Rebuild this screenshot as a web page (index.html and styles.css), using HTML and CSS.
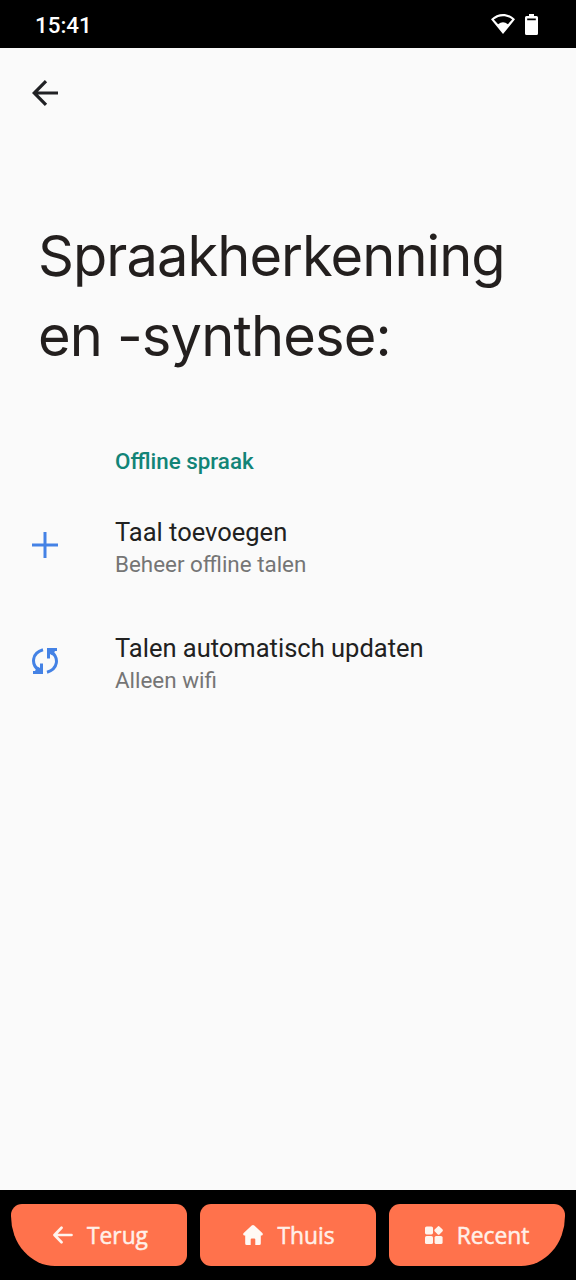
FILE: index.html
```html
<!DOCTYPE html>
<html lang="nl">
<head>
<meta charset="utf-8">
<title>Spraakherkenning en -synthese</title>
<link rel="stylesheet" href="styles.css">
</head>
<body>
<div class="screen">
  <header class="status">
    <span class="clock">15:41</span>
    <div class="status-icons">
      <svg width="24" height="20" viewBox="0 0 24 20"><path fill="#fff" fill-rule="evenodd" d="M0 5.300C7-1.700 17-1.700 24 5.300L12 20ZM2.800 5.600L7.100 10.200Q12 6.500 16.900 10.200L21.200 5.600C15.500 1 8.500 1 2.800 5.600Z"/></svg>
      <svg width="13" height="21" viewBox="0 0 13 21"><path fill="#fff" fill-rule="evenodd" d="M4 0H9V2H11.500Q13 2 13 3.500V19.500Q13 21 11.500 21H1.500Q0 21 0 19.500V3.500Q0 2 1.500 2H4ZM2.200 4.600V6.300H10.800V4.600Z"/></svg>
    </div>
  </header>
  <main class="content">
    <svg class="back" width="26" height="26" viewBox="0 0 26 26" fill="none" stroke="#202124" stroke-width="3.200"><path d="M26 13H2M14 1.200L2.200 13L14 24.800"/></svg>
    <h1 class="title"><span class="title-one">Spraakherkenning</span><br><span class="title-two">en -synthese:</span></h1>
    <h2 class="section">Offline spraak</h2>
    <div class="row">
      <svg class="row-icon" width="26" height="26" viewBox="0 0 26 26" fill="none" stroke="#4482e5" stroke-width="3"><path d="M13 0V26M0 13H26"/></svg>
      <div><div class="name">Taal toevoegen</div><div class="detail">Beheer offline talen</div></div>
    </div>
    <div class="row">
      <svg class="row-icon" width="26" height="26" viewBox="0 0 26 26" fill="none" stroke="#4482e5" stroke-width="3"><path d="M11 1.800C0 5-1.500 16 7 22.500M15 24.200C26 21 27.500 10 19 3.500"/><path fill="#4482e5" stroke="none" d="M1 26H11V15.500H8V20L5.500 18.500L3 23H1ZM25 0H15V10.500H18V6L20.500 7.500L23 3H25Z"/></svg>
      <div><div class="name">Talen automatisch updaten</div><div class="detail">Alleen wifi</div></div>
    </div>
  </main>
  <nav class="nav">
    <div class="button button-left">
      <svg width="20" height="18" viewBox="0 0 20 18" fill="none" stroke="#fff4ed" stroke-width="2.700" stroke-linecap="round" stroke-linejoin="round"><path d="M18.500 9H2M8.500 1.800L1.500 9L8.500 16.200"/></svg>
      <span>Terug</span>
    </div>
    <div class="button">
      <svg width="20" height="20" viewBox="0 0 20 20"><path fill="#fff9f5" d="M8.700.6Q10-.4 11.300.6L19.300 8Q20.200 9 19.500 10Q19 10.700 17.800 10.500V18.500Q17.800 20 16.300 20H12.300V14.500Q12.300 13.400 11.200 13.400H8.800Q7.700 13.400 7.700 14.500V20H3.700Q2.200 20 2.200 18.500V10.500Q1 10.700.5 10Q-.2 9 .7 8Z"/></svg>
      <span>Thuis</span>
    </div>
    <div class="button button-right">
      <svg width="18" height="18" viewBox="0 0 18 18" fill="#fff4ed"><rect x="0" y="0.400" width="8" height="8" rx="1.600"/><rect x="0" y="10" width="8" height="8" rx="1.600"/><rect x="9.600" y="10" width="8" height="8" rx="1.600"/><rect x="10.200" y="1" width="6.800" height="6.800" rx="1.500" transform="rotate(45 13.600 4.400)"/></svg>
      <span>Recent</span>
    </div>
  </nav>
</div>
</body>
</html>
```
FILE: styles.css
```css
* { box-sizing: border-box; }
body { margin: 0; background: #000; }
svg { display: block; flex: none; }
.screen { width: 576px; height: 1280px; display: flex; flex-direction: column; font-family: Roboto, sans-serif; }
.status { height: 48px; background: #000; color: #fff; display: flex; justify-content: space-between; padding: 0 38px 0 35px; }
.clock { font-size: 22.4px; font-weight: 500; line-height: 50px; }
.status-icons { display: flex; gap: 10px; padding-top: 14px; }
.content { height: 1142px; background: #fafafa; padding: 32px 32px 0; }
.title { margin: 110px 0 0 6px; font: 400 56px/80px Inter, sans-serif; color: #231f1e; white-space: nowrap; }
.title-one { letter-spacing: -0.95px; }
.title-two { letter-spacing: -0.85px; }
.section { margin: 72px 0 0 83px; font-size: 22.4px; line-height: 26px; font-weight: 500; color: #128477; }
.row { display: flex; gap: 57px; margin-top: 42px; height: 74px; }
.row-icon { margin-top: 16px; }
.name { color: #212121; font-size: 25.5px; line-height: 32px; white-space: nowrap; }
.detail { color: #757575; font-size: 22.4px; line-height: 32px; white-space: nowrap; }
.nav { height: 90px; background: #000; display: flex; gap: 13px; padding: 14px 11px 14px; }
.button { width: 176px; height: 62px; background: #ff724c; border-radius: 11px; display: flex; align-items: center; justify-content: center; gap: 14px; padding-left: 2px; color: #fff0e8; font: 400 22.800px/30px "Open Sans", sans-serif; -webkit-text-stroke: 0.5px #fff0e8; }
.button-left { border-radius: 11px 11px 11px 44px / 11px 11px 11px 50px; padding-left: 3px; }
.button-right { border-radius: 11px 11px 44px 11px / 11px 11px 50px 11px; padding-left: 0; }
.button span { position: relative; top: 1px; }
```
